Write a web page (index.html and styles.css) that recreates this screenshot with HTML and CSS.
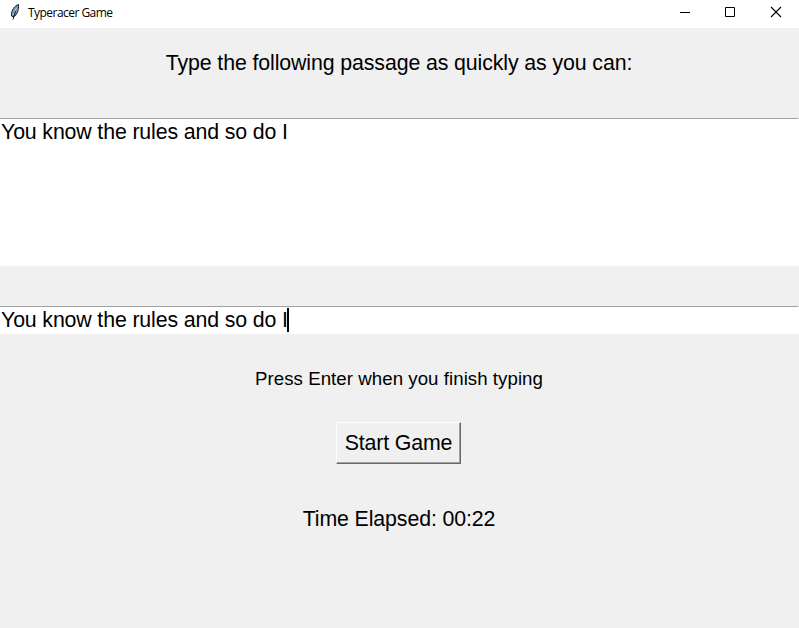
FILE: index.html
```html
<!DOCTYPE html>
<html lang="en">
<head>
<meta charset="utf-8">
<title>Typeracer Game</title>
<link rel="stylesheet" href="styles.css">
</head>
<body>
<header class="titlebar">
  <svg class="feather" width="16" height="20" viewBox="0 0 16 20"><path d="M11.500 2.500C8 3.500 4 8 4.500 14L6.500 15C10 13 12 8 11.500 2.500Z" fill="#7896b4" stroke="#17202c"/><path d="M9.500 6L6 13" stroke="#b9d3ea" fill="none"/><path d="M8.500 9L6 17.500" stroke="#111" fill="none"/></svg>
  <span class="caption">Typeracer Game</span>
  <div class="controls">
    <svg width="46" height="28" viewBox="0 0 46 28"><path d="M19 12.500h10" stroke="#000"/></svg>
    <svg width="46" height="28" viewBox="0 0 46 28"><path d="M18.500 7.500h9v9h-9z" stroke="#000" fill="none"/></svg>
    <svg width="46" height="28" viewBox="0 0 46 28"><path d="M18 7l10 10M28 7l-10 10" stroke="#000" stroke-width="1.100"/></svg>
  </div>
</header>
<main>
  <h1 class="prompt"><span>Type the following passage as quickly as you can:</span></h1>
  <div class="field passage"><span>You know the rules and so do I</span></div>
  <div class="field entry"><span>You know the rules and so do I</span><i class="caret"></i></div>
  <p class="hint"><span>Press Enter when you finish typing</span></p>
  <button class="start">Start Game</button>
  <p class="timer"><span>Time Elapsed: 00:22</span></p>
</main>
</body>
</html>
```
FILE: styles.css
```css
* { box-sizing: border-box; }
body { margin: 0; height: 628px; background: #f0f0f0; color: #000; font: 21.33px/24px "Liberation Sans", Arial, sans-serif; letter-spacing: -0.11px; overflow: hidden; }
.titlebar { display: flex; height: 28px; background: #fff; align-items: flex-start; padding-left: 7px; }
.feather { margin-top: 2px; }
.caption { margin-left: 5px; font: 12px/26px "Open Sans", sans-serif; letter-spacing: -0.54px; }
.controls { display: flex; margin-left: auto; }
.controls svg { display: block; }
main { display: flex; flex-direction: column; align-items: center; }
h1, p { margin: 0; font-size: 21.33px; font-weight: 400; white-space: nowrap; }
.prompt { margin-top: 23px; padding-right: 1px; }
.field { width: 100%; background: #fff; border-top: 1px solid #a0a0a0; border-right: 1px solid #fff; padding: 1px; display: flex; letter-spacing: -0.14px; }
.passage { margin-top: 43px; height: 148px; }
.entry { margin-top: 40px; height: 28px; }
.caret { width: 2px; height: 24px; margin-left: -1px; background: #000; }
.hint { margin-top: 33px; padding-right: 1px; font-size: 18.67px; letter-spacing: 0.05px; }
.start { margin: 31px 2px 0 0; width: 125px; height: 42px; padding: 0; background: #f0f0f0; border: 1px solid; border-color: #fff #696969 #696969 #fff; box-shadow: inset -1px -1px #a0a0a0; border-radius: 0; font: inherit; letter-spacing: -0.15px; color: #000; }
.timer { margin-top: 43px; padding-right: 1px; }
```
